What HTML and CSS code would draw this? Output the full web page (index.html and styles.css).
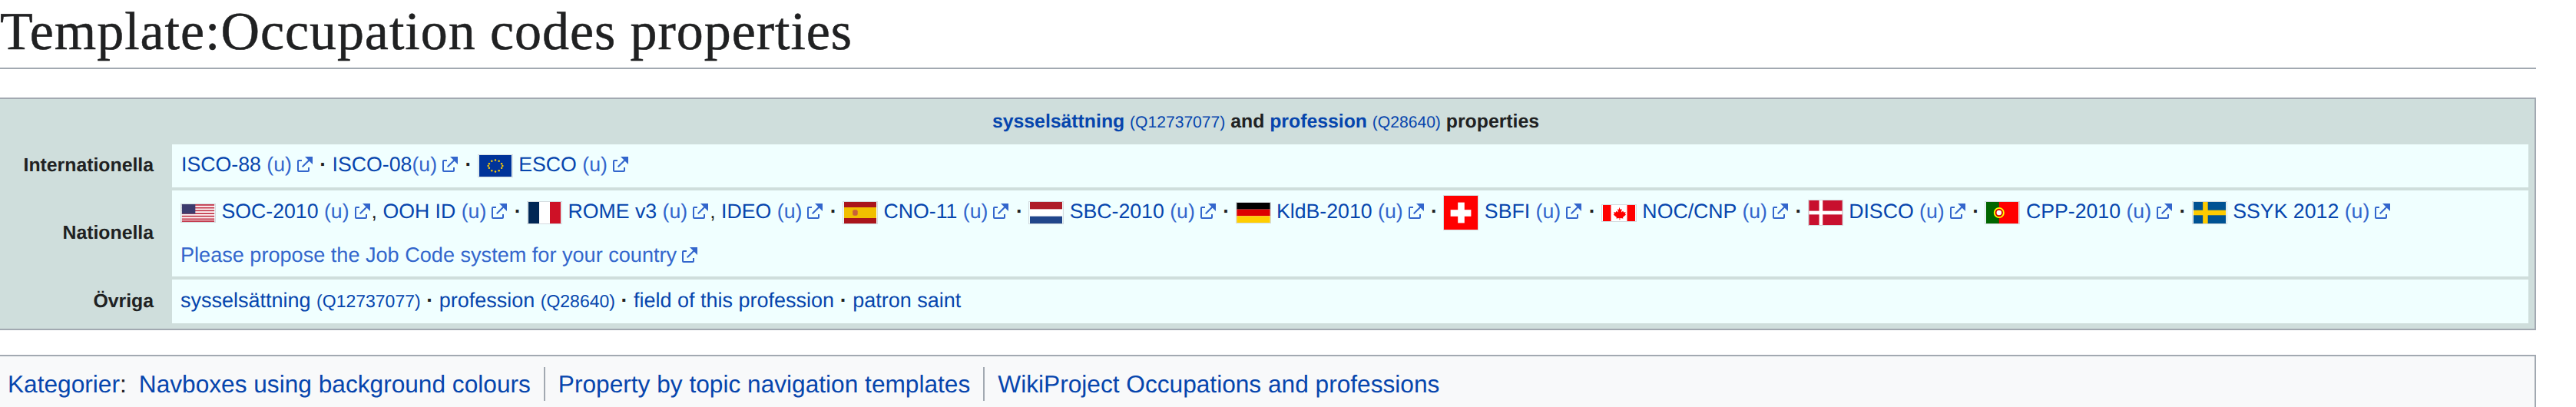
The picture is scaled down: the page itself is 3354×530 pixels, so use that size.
FILE: index.html
```html
<!DOCTYPE html>
<html lang="sv">
<head>
<meta charset="utf-8">
<title>Template:Occupation codes properties</title>
<link rel="stylesheet" href="styles.css">
</head>
<body>
<svg class="defs" aria-hidden="true"><defs><symbol id="ext" viewBox="0 0 12 12"><path fill="currentColor" d="M6 1h5v5L8.86 3.85 4.7 8 4 7.3l4.15-4.16zM2 3h2v1H2v6h6V8h1v2a1 1 0 0 1-1 1H2a1 1 0 0 1-1-1V4a1 1 0 0 1 1-1"/></symbol></defs></svg>
<h1 class="title">Template:Occupation codes properties</h1>
<div class="navbox">
  <div class="head"><a class="l" href="#">sysselsättning</a> <small class="q">(Q12737077)</small> and <a class="l" href="#">profession</a> <small class="q">(Q28640)</small> properties</div>
  <div class="label">Internationella</div>
  <div class="cell row-a"><a class="l" href="#">ISCO-88</a> <a class="u" href="#">(u)<svg class="ext"><use href="#ext"/></svg></a> <b class="dot">·</b> <a class="l" href="#">ISCO-08</a><a class="u" href="#">(u)<svg class="ext"><use href="#ext"/></svg></a> <b class="dot">·</b> <svg class="flag f30" viewBox="0 0 45 30"><rect width="45" height="30" fill="#039"/><g fill="#fc0"><circle cx="22.5" cy="7" r="1.3"/><circle cx="27.5" cy="8.3" r="1.3"/><circle cx="31.2" cy="12" r="1.3"/><circle cx="32.5" cy="15" r="1.3"/><circle cx="31.2" cy="18" r="1.3"/><circle cx="27.5" cy="21.7" r="1.3"/><circle cx="22.5" cy="23" r="1.3"/><circle cx="17.5" cy="21.7" r="1.3"/><circle cx="13.8" cy="18" r="1.3"/><circle cx="12.5" cy="15" r="1.3"/><circle cx="13.8" cy="12" r="1.3"/><circle cx="17.5" cy="8.3" r="1.3"/></g></svg>&nbsp;<a class="l" href="#">ESCO</a> <a class="u" href="#">(u)<svg class="ext"><use href="#ext"/></svg></a></div>
  <div class="label">Nationella</div>
  <div class="cell row-b">
    <div class="codes"><svg class="flag f25" viewBox="0 0 46 25"><rect width="46" height="25" fill="#fff"/><g fill="#c33b4e"><rect width="46" height="2"/><rect y="4" width="46" height="2"/><rect y="8" width="46" height="2"/><rect y="12" width="46" height="2"/><rect y="16" width="46" height="2"/><rect y="20" width="46" height="2"/><rect y="23" width="46" height="2"/></g><rect width="19" height="13.500" fill="#3c3b6e"/></svg>&nbsp;<a class="l" href="#">SOC-2010</a> <a class="u" href="#">(u)<svg class="ext"><use href="#ext"/></svg></a>, <a class="l" href="#">OOH ID</a> <a class="u" href="#">(u)<svg class="ext"><use href="#ext"/></svg></a> <b class="dot">·</b> <svg class="flag f30" viewBox="0 0 45 30"><rect width="45" height="30" fill="#fff"/><rect width="15" height="30" fill="#002654"/><rect x="30" width="15" height="30" fill="#ce1126"/></svg>&nbsp;<a class="l" href="#">ROME v3</a> <a class="u" href="#">(u)<svg class="ext"><use href="#ext"/></svg></a>, <a class="l" href="#">IDEO</a> <a class="u" href="#">(u)<svg class="ext"><use href="#ext"/></svg></a> <b class="dot">·</b> <svg class="flag f30" viewBox="0 0 45 30"><rect width="45" height="30" fill="#aa151b"/><rect y="7.500" width="45" height="15" fill="#f1bf00"/><rect x="12" y="11" width="7" height="8" rx="2" fill="#c8603a"/></svg>&nbsp;<a class="l" href="#">CNO-11</a> <a class="u" href="#">(u)<svg class="ext"><use href="#ext"/></svg></a> <b class="dot">·</b> <svg class="flag f30" viewBox="0 0 45 30"><rect width="45" height="30" fill="#fff"/><rect width="45" height="10" fill="#ae1c28"/><rect y="20" width="45" height="10" fill="#21468b"/></svg>&nbsp;<a class="l" href="#">SBC-2010</a> <a class="u" href="#">(u)<svg class="ext"><use href="#ext"/></svg></a> <b class="dot">·</b> <svg class="flag f28" viewBox="0 0 45 27"><rect width="45" height="9" fill="#000"/><rect y="9" width="45" height="9" fill="#d00"/><rect y="18" width="45" height="9" fill="#ffce00"/></svg>&nbsp;<a class="l" href="#">KldB-2010</a> <a class="u" href="#">(u)<svg class="ext"><use href="#ext"/></svg></a> <b class="dot">·</b> <svg class="flag f46" viewBox="0 0 46 46"><rect width="46" height="46" fill="#f00"/><rect x="19" y="9" width="9" height="28" fill="#fff"/><rect x="9" y="19" width="28" height="9" fill="#fff"/></svg>&nbsp;<a class="l" href="#">SBFI</a> <a class="u" href="#">(u)<svg class="ext"><use href="#ext"/></svg></a> <b class="dot">·</b> <svg class="flag f23" viewBox="0 0 46 23"><rect width="46" height="23" fill="#fff"/><rect width="11.500" height="23" fill="#f00"/><rect x="34.500" width="11.500" height="23" fill="#f00"/><path fill="#f00" d="M23 3l2 3.500 2-1-.8 5 2.600-2 .8 2 3-.5-1 3 1.400.8-4.600 3.600.6 1.800-4.500-.6V21h-1v-2.400l-4.500.6.600-1.800-4.600-3.600 1.400-.8-1-3 3 .5.800-2 2.600 2-.8-5 2 1z"/></svg>&nbsp;<a class="l" href="#">NOC/CNP</a> <a class="u" href="#">(u)<svg class="ext"><use href="#ext"/></svg></a> <b class="dot">·</b> <svg class="flag f34" viewBox="0 0 46 34"><rect width="46" height="34" fill="#c8102e"/><rect x="14" width="5" height="34" fill="#fff"/><rect y="14.500" width="46" height="5" fill="#fff"/></svg>&nbsp;<a class="l" href="#">DISCO</a> <a class="u" href="#">(u)<svg class="ext"><use href="#ext"/></svg></a> <b class="dot">·</b> <svg class="flag f30" viewBox="0 0 45 30"><rect width="45" height="30" fill="#f00"/><rect width="18" height="30" fill="#060"/><circle cx="18" cy="15" r="7.500" fill="#ff0"/><circle cx="18" cy="15" r="4.500" fill="#fff" stroke="#d00" stroke-width="2"/></svg>&nbsp;<a class="l" href="#">CPP-2010</a> <a class="u" href="#">(u)<svg class="ext"><use href="#ext"/></svg></a> <b class="dot">·</b> <svg class="flag f30" viewBox="0 0 45 30"><rect width="45" height="30" fill="#005293"/><rect x="13" width="7" height="30" fill="#fecb00"/><rect y="11.500" width="45" height="7" fill="#fecb00"/></svg>&nbsp;<a class="l" href="#">SSYK 2012</a> <a class="u" href="#">(u)<svg class="ext"><use href="#ext"/></svg></a></div>
    <div class="propose"><a class="u" href="#">Please propose the Job Code system for your country<svg class="ext"><use href="#ext"/></svg></a></div>
  </div>
  <div class="label">Övriga</div>
  <div class="cell row-c"><a class="l" href="#">sysselsättning</a> <small class="q">(Q12737077)</small> <b class="dot">·</b> <a class="l" href="#">profession</a> <small class="q">(Q28640)</small> <b class="dot">·</b> <a class="l" href="#">field of this profession</a> <b class="dot">·</b> <a class="l" href="#">patron saint</a></div>
</div>
<div class="catlinks"><a class="l" href="#">Kategorier</a><span class="colon">:</span><ul class="cats"><li><a class="l" href="#">Navboxes using background colours</a></li><li><a class="l" href="#">Property by topic navigation templates</a></li><li><a class="l" href="#">WikiProject Occupations and professions</a></li></ul></div>
</body>
</html>
```
FILE: styles.css
```css
html, body { margin: 0; background: #fff; }
body { padding-right: 52px; font-family: "Liberation Sans", Arial, sans-serif; color: #202122; height: 530px; overflow: hidden; text-rendering: geometricPrecision; }
.defs { display: none; }
a { text-decoration: none; }
.title { margin: 0; height: 88px; border-bottom: 2px solid #a2a9b1; font: 400 70px/83px "Liberation Serif", serif; color: #202122; letter-spacing: .95px; -webkit-text-stroke: .5px #202122; }
.navbox { margin-top: 37px; border: 2px solid #a2a9b1; border-left-width: 0; background: #cfdedc; display: grid; grid-template-columns: 224px 1fr; row-gap: 4px; padding: 0 8px 7px 0; font-size: 26.7px; }
.head { grid-column: 1 / -1; height: 55px; margin-right: -4px; text-align: center; font-weight: bold; font-size: 24.8px; line-height: 59px; }
.label { display: flex; align-items: center; justify-content: flex-end; padding-right: 24px; font-weight: bold; font-size: 24.8px; }
.cell { background: #f0ffff; padding: 6px 11px 9px; line-height: 40px; white-space: nowrap; box-sizing: border-box; }
.row-a { height: 56px; padding-left: 12px; }
.row-b { height: 112px; }
.row-c { height: 57px; padding-top: 7px; font-size: 27px; }
.propose { margin-top: 12px; font-size: 27.1px; }
.l { color: #0645ad; }
.u { color: #36c; }
.q { font-size: 85%; color: #0645ad; font-weight: normal; }
.row-c .q { font-size: 23px; }
.dot { font-weight: bold; color: #202122; }
.ext { width: 24px; height: 24px; margin-left: 5px; vertical-align: -3px; }
.flag { vertical-align: middle; box-sizing: border-box; border: 1px solid rgba(200, 204, 209, .7); width: 46px; }
.f30 { height: 30px; }
.f25 { height: 25px; }
.f28 { height: 28px; }
.f46 { height: 46px; }
.f23 { height: 23px; }
.f34 { height: 34px; }
.catlinks { margin-top: 32px; display: flex; align-items: flex-start; height: 90px; box-sizing: border-box; padding: 14px 10px; border: 2px solid #a2a9b1; border-left-width: 0; background: #f8f9fa; font-size: 31.65px; line-height: 44px; }
.colon { margin-right: 16px; color: #202122; }
.cats { display: flex; list-style: none; margin: 0; padding: 0; }
.cats li { padding: 0 17px; border-left: 2px solid #a2a9b1; }
.cats li:first-child { padding-left: 0; border-left: 0; }
```
